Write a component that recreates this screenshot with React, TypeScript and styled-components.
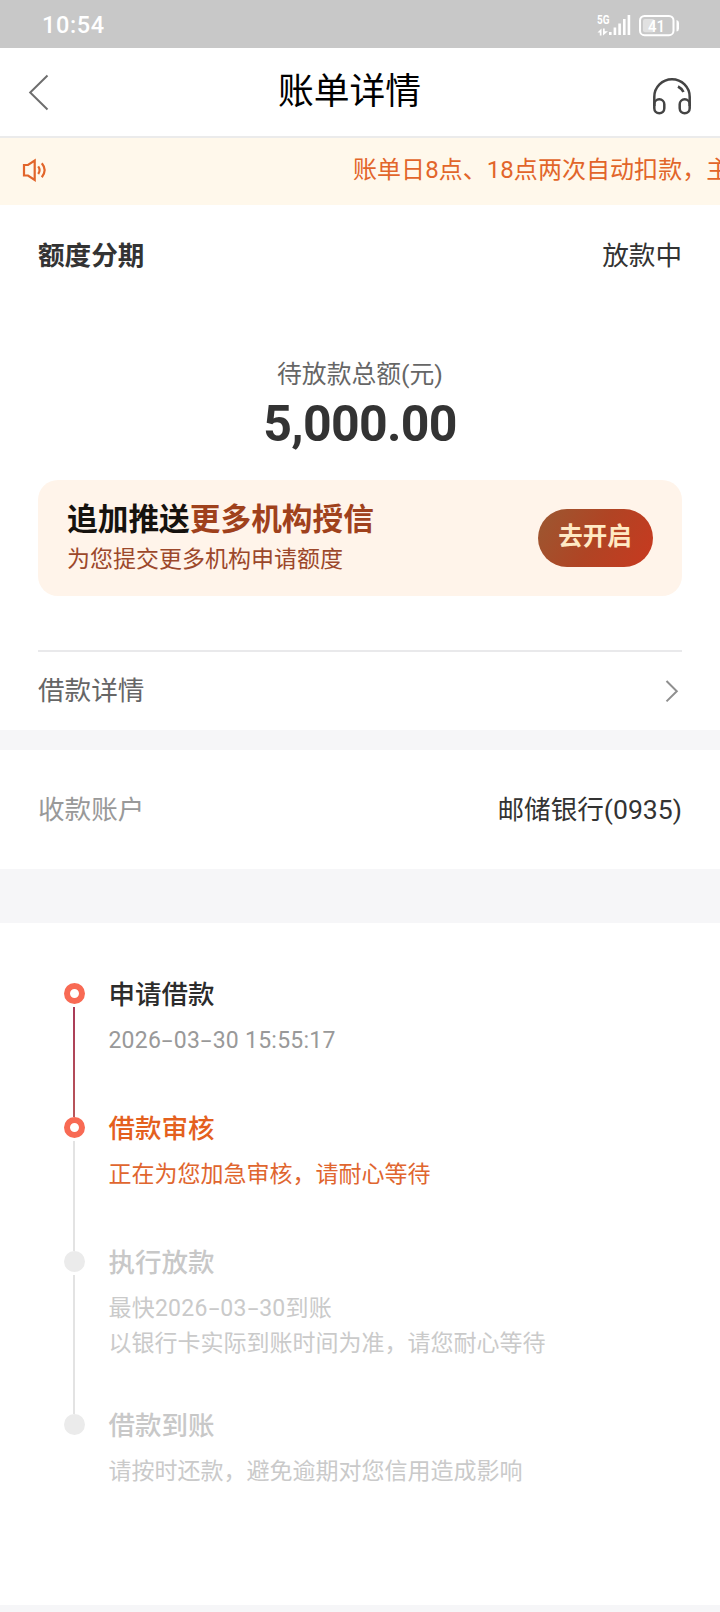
import React from "react";
import styled, { createGlobalStyle } from "styled-components";

const GlobalStyle = createGlobalStyle`
  * { box-sizing: border-box; }
  body {
    margin: 0;
    background: #f6f6f8;
    font-family: Roboto, "Noto Sans CJK SC", sans-serif;
    color: #333;
  }
  svg { flex: none; }
`;

const Page = styled.div`
  width: 720px;
  height: 1612px;
  overflow: hidden;
  display: flex;
  flex-direction: column;
`;

const StatusBar = styled.div`
  height: 48px;
  flex: none;
  display: flex;
  align-items: center;
  justify-content: space-between;
  padding: 1px 40px 0 42px;
  background: #c8c8c8;
  color: #fff;
`;

const Clock = styled.span`
  font-size: 23.5px;
  font-weight: 500;
  letter-spacing: 0.6px;
  line-height: 48px;
`;

const Header = styled.header`
  height: 90px;
  flex: none;
  display: flex;
  align-items: flex-start;
  justify-content: space-between;
  padding: 0 28px;
  background: #fff;
  border-bottom: 2px solid #ebebeb;
`;

const Title = styled.h1`
  margin: 0;
  padding: 0 3px 0 0;
  font-size: 35.8px;
  font-weight: 400;
  line-height: 88px;
  color: #000;
`;

const BackIcon = styled.svg`
  width: 22px;
  height: 38px;
  margin-top: 25px;
`;

const HeadsetIcon = styled.svg`
  width: 40px;
  height: 38px;
  margin-top: 29px;
`;

const Notice = styled.div`
  height: 67px;
  flex: none;
  display: flex;
  align-items: center;
  padding: 0 0 3px 22px;
  overflow: hidden;
  background: #fff8eb;
  color: #e2652a;
`;

const NoticeText = styled.span`
  margin-left: 305px;
  font-size: 24px;
  letter-spacing: 0.05px;
  line-height: 36px;
  white-space: nowrap;
`;

const Summary = styled.section`
  height: 525px;
  flex: none;
  padding: 32px 38px 0;
  background: #fff;
`;

const Row = styled.div<{ $height: number }>`
  height: ${(p) => p.$height}px;
  flex: none;
  display: flex;
  align-items: center;
  justify-content: space-between;
`;

const Label = styled.span<{ $color?: string; $bold?: boolean }>`
  font-size: 26.6px;
  font-weight: ${(p) => (p.$bold ? 700 : 400)};
  line-height: 38px;
  color: ${(p) => p.$color ?? "#333"};
`;

const Amount = styled.div`
  display: flex;
  flex-direction: column;
  align-items: center;
  padding-top: 82px;
  height: 205px;
`;

const AmountLabel = styled.span`
  font-size: 24.8px;
  line-height: 36px;
  color: #666;
`;

const AmountValue = styled.strong`
  margin-top: 1px;
  font-size: 50px;
  font-weight: 700;
  line-height: 60px;
  letter-spacing: -0.7px;
  color: #333;
`;

const Promo = styled.div`
  height: 116px;
  display: flex;
  align-items: center;
  justify-content: space-between;
  padding: 0 29px;
  border-radius: 20px;
  background: #fff4ea;
`;

const PromoCopy = styled.div`
  display: flex;
  flex-direction: column;
  padding-top: 1px;
`;

const PromoTitle = styled.span`
  font-size: 30.7px;
  font-weight: 700;
  line-height: 42px;
  color: #16120e;

  em {
    font-style: normal;
    color: #9f411c;
  }
`;

const PromoSub = styled.span`
  font-size: 23px;
  line-height: 37px;
  color: #9c482b;
`;

const PromoButton = styled.button`
  width: 115px;
  height: 58px;
  padding: 0 1px 2px 0;
  border: 0;
  border-radius: 29px;
  background: linear-gradient(120deg, #9d5630 5%, #b04424 50%, #c63a20 95%);
  color: #ffe9c4;
  font-family: inherit;
  font-size: 24.5px;
  font-weight: 700;
  line-height: 36px;
`;

const Divider = styled.div`
  height: 2px;
  margin-top: 54px;
  background: #e9e9eb;
`;

const Account = styled.section`
  height: 119px;
  flex: none;
  margin-top: 20px;
  padding: 0 38px;
  background: #fff;
`;

const Timeline = styled.section`
  height: 682px;
  flex: none;
  margin-top: 54px;
  padding: 51px 0 0 64px;
  background: #fff;
`;

const Step = styled.div<{ $height: number }>`
  height: ${(p) => p.$height}px;
  display: flex;
`;

const Rail = styled.div`
  width: 21px;
  flex: none;
  display: flex;
  flex-direction: column;
  align-items: center;
  padding-top: 9px;
`;

const Dot = styled.i<{ $active?: boolean }>`
  width: 21px;
  height: 21px;
  flex: none;
  border-radius: 50%;
  border: 6px solid ${(p) => (p.$active ? "#f86a54" : "#ebebeb")};
  background: ${(p) => (p.$active ? "#fff" : "#ebebeb")};
`;

const Line = styled.i<{ $active?: boolean }>`
  width: 2px;
  flex: 1;
  margin: 3px 1px -9px 0;
  background: ${(p) => (p.$active ? "linear-gradient(#a93a58, #b9565a)" : "#e3e3e3")};
`;

const StepCopy = styled.div`
  padding: 1px 0 0 23.4px;
  display: flex;
  flex-direction: column;
`;

const StepTitle = styled.span<{ $color: string }>`
  font-size: 26.5px;
  font-weight: 500;
  line-height: 40px;
  color: ${(p) => p.$color};
`;

const StepNote = styled.span<{ $color: string }>`
  margin-top: 7.5px;
  font-size: 23px;
  line-height: 35px;
  color: ${(p) => p.$color};
`;

const Digits = styled.span`
  letter-spacing: 0.25px;
`;

const Dash = styled.span`
  display: inline-block;
  width: 12.6px;
  text-align: center;
  transform: scaleX(1.7);
`;

const DateText = ({ value }: { value: string }) => (
  <Digits>
    {value.split("-").map((part, i) => (
      <React.Fragment key={i}>
        {i > 0 && <Dash>-</Dash>}
        {part}
      </React.Fragment>
    ))}
  </Digits>
);

const StatusIcons = () => (
  <svg width="84" height="26" viewBox="596 11 84 26" fill="#fff">
    <text x="597" y="23" fontSize="12" fontWeight="700" textLength="12.500" lengthAdjust="spacingAndGlyphs">5G</text>
    <path d="M597.500 31.500 L601.500 27.500 V34.500 H599.800 V31.500 Z M603 27.500 H604.700 V30.300 H608 L603 34.500 Z" />
    <rect x="609" y="31" width="2.600" height="3" />
    <rect x="613.600" y="26.500" width="2.600" height="7.500" />
    <rect x="618.300" y="22.500" width="2.600" height="11.500" />
    <rect x="623" y="18" width="2.600" height="16" />
    <rect x="627.600" y="14" width="2.600" height="20" />
    <rect x="640" y="15" width="33.500" height="19.200" rx="4.500" fill="none" stroke="#fff" strokeWidth="2" />
    <rect x="643" y="18" width="11.500" height="13.300" rx="2" fillOpacity="0.450" />
    <path d="M676.500 19 Q679 19.500 679 22 V27.500 Q679 30 676.500 30.500 Z" />
    <text x="648" y="30.500" fontSize="17" fontWeight="500" textLength="17" lengthAdjust="spacingAndGlyphs">41</text>
  </svg>
);

const steps = [
  {
    title: "申请借款",
    notes: ["2026-03-30 15:55:17"],
    height: 134,
    color: "#2c2c2c",
    noteColor: "#999",
    reached: true,
    lineActive: true,
  },
  {
    title: "借款审核",
    notes: ["正在为您加急审核，请耐心等待"],
    height: 134,
    color: "#e4601e",
    noteColor: "#e0662f",
    reached: true,
  },
  {
    title: "执行放款",
    notes: ["最快2026-03-30到账", "以银行卡实际到账时间为准，请您耐心等待"],
    height: 163,
    color: "#c8c8c8",
    noteColor: "#cacaca",
  },
  {
    title: "借款到账",
    notes: ["请按时还款，避免逾期对您信用造成影响"],
    height: 120,
    color: "#c8c8c8",
    noteColor: "#cacaca",
  },
];

export default function App() {
  return (
    <>
      <GlobalStyle />
      <Page>
        <StatusBar>
          <Clock>10:54</Clock>
          <StatusIcons />
        </StatusBar>

        <Header>
          <BackIcon viewBox="0 0 22 38" fill="none" stroke="#6e6e6e" strokeWidth="2">
            <path d="M19.500 2.500 L2.200 19.500 L19.500 36.500" />
          </BackIcon>
          <Title>账单详情</Title>
          <HeadsetIcon viewBox="652 77 40 38" fill="none" stroke="#444" strokeWidth="2.5">
            <path d="M654.300 106 V97 A17.700 17.700 0 0 1 689.700 97 V106" />
            <rect x="654.300" y="99.300" width="10" height="14" rx="5" />
            <rect x="679.700" y="99.300" width="10" height="14" rx="5" />
            <path d="M678 86.500 Q681.500 88.300 683.500 92" strokeWidth="2.600" />
          </HeadsetIcon>
        </Header>

        <Notice>
          <svg width="26" height="26" viewBox="0 0 26 26" fill="none" stroke="#e2652a" strokeWidth="2.2">
            <path d="M2 8 H6 L12.700 3.500 V23 L6 18.500 H2 Z" />
            <path d="M16.200 9.300 Q19 13 16.200 17" />
            <path d="M19.800 6.200 Q25.500 13 19.800 20.300" />
          </svg>
          <NoticeText>账单日8点、18点两次自动扣款，主</NoticeText>
        </Notice>

        <Summary>
          <Row $height={38}>
            <Label $bold>额度分期</Label>
            <Label>放款中</Label>
          </Row>
          <Amount>
            <AmountLabel>待放款总额(元)</AmountLabel>
            <AmountValue>5,000.00</AmountValue>
          </Amount>
          <Promo>
            <PromoCopy>
              <PromoTitle>
                追加推送<em>更多机构授信</em>
              </PromoTitle>
              <PromoSub>为您提交更多机构申请额度</PromoSub>
            </PromoCopy>
            <PromoButton>去开启</PromoButton>
          </Promo>
          <Divider />
          <Row $height={78}>
            <Label $color="#666">借款详情</Label>
            <svg width="18" height="24" viewBox="0 0 18 24" fill="none" stroke="#8f8f8f" strokeWidth="2">
              <path d="M2.500 2 L12.800 12.200 L2.500 22.400" />
            </svg>
          </Row>
        </Summary>

        <Account>
          <Row $height={119}>
            <Label $color="#999">收款账户</Label>
            <Label>邮储银行(0935)</Label>
          </Row>
        </Account>

        <Timeline>
          {steps.map((step, i) => (
            <Step key={step.title} $height={step.height}>
              <Rail>
                <Dot $active={step.reached} />
                {i < steps.length - 1 && <Line $active={step.lineActive} />}
              </Rail>
              <StepCopy>
                <StepTitle $color={step.color}>{step.title}</StepTitle>
                <StepNote $color={step.noteColor}>
                  {step.notes.map((note) => (
                    <div key={note}>{/\d/.test(note) ? <DateText value={note} /> : note}</div>
                  ))}
                </StepNote>
              </StepCopy>
            </Step>
          ))}
        </Timeline>
      </Page>
    </>
  );
}
